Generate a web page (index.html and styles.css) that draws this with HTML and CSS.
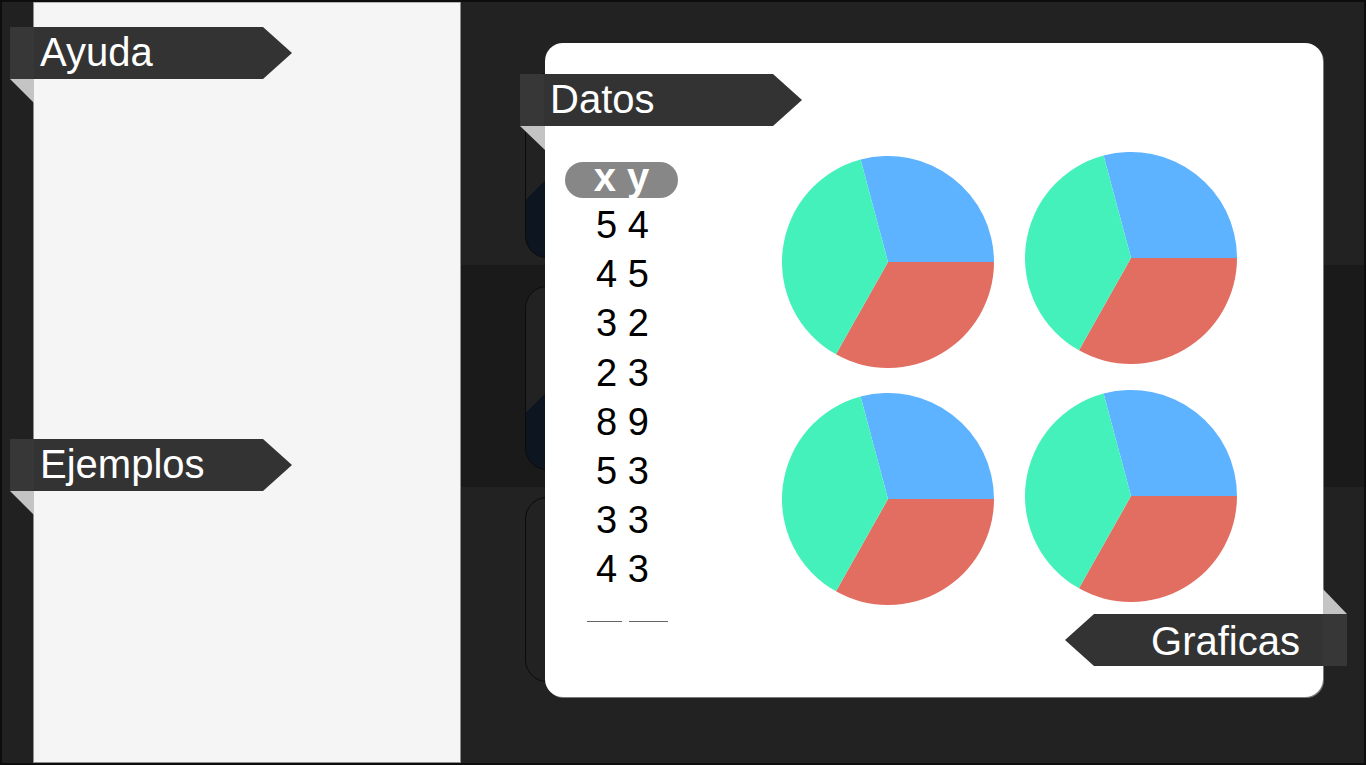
FILE: index.html
```html
<!DOCTYPE html>
<html lang="es">
<head>
<meta charset="utf-8">
<title>Datos y Graficas</title>
<link rel="stylesheet" href="styles.css">
</head>
<body>
<div class="app">
  <div class="gutter"></div>
  <aside class="sidebar">
    <div class="tag tag-left tag-ayuda">
      <div class="tag-body">Ayuda</div>
      <div class="tag-fold"></div>
    </div>
    <div class="tag tag-left tag-ejemplos">
      <div class="tag-body">Ejemplos</div>
      <div class="tag-fold"></div>
    </div>
  </aside>
  <main class="stage">
    <section class="band band-a"><div class="panel panel-thumb"></div></section>
    <section class="band band-b"><div class="panel panel-thumb"></div></section>
    <section class="band band-c"><div class="panel"></div></section>

    <div class="modal">
      <div class="tag tag-left tag-datos">
        <div class="tag-body">Datos</div>
        <div class="tag-fold"></div>
      </div>

      <div class="data">
        <div class="data-head">x y</div>
        <div class="data-row">5 4</div>
        <div class="data-row">4 5</div>
        <div class="data-row">3 2</div>
        <div class="data-row">2 3</div>
        <div class="data-row">8 9</div>
        <div class="data-row">5 3</div>
        <div class="data-row">3 3</div>
        <div class="data-row">4 3</div>
        <div class="data-inputs">
          <span class="field field-x"></span>
          <span class="field field-y"></span>
        </div>
      </div>

      <div class="pies">
        <div class="pie-col">
          <svg class="pie" viewBox="-106 -106 212 212" width="212" height="212">
            <path class="slice-blue" d="M0 0 L106 0 A106 106 0 0 0 -27.43 -102.39 Z"/>
            <path class="slice-red" d="M0 0 L106 0 A106 106 0 0 1 -52.04 92.35 Z"/>
            <path class="slice-green" d="M0 0 L-27.43 -102.39 A106 106 0 0 0 -52.04 92.35 Z"/>
          </svg>
          <svg class="pie" viewBox="-106 -106 212 212" width="212" height="212">
            <path class="slice-blue" d="M0 0 L106 0 A106 106 0 0 0 -27.43 -102.39 Z"/>
            <path class="slice-red" d="M0 0 L106 0 A106 106 0 0 1 -52.04 92.35 Z"/>
            <path class="slice-green" d="M0 0 L-27.43 -102.39 A106 106 0 0 0 -52.04 92.35 Z"/>
          </svg>
        </div>
        <div class="pie-col pie-col-alt">
          <svg class="pie" viewBox="-106 -106 212 212" width="212" height="212">
            <path class="slice-blue" d="M0 0 L106 0 A106 106 0 0 0 -27.43 -102.39 Z"/>
            <path class="slice-red" d="M0 0 L106 0 A106 106 0 0 1 -52.04 92.35 Z"/>
            <path class="slice-green" d="M0 0 L-27.43 -102.39 A106 106 0 0 0 -52.04 92.35 Z"/>
          </svg>
          <svg class="pie" viewBox="-106 -106 212 212" width="212" height="212">
            <path class="slice-blue" d="M0 0 L106 0 A106 106 0 0 0 -27.43 -102.39 Z"/>
            <path class="slice-red" d="M0 0 L106 0 A106 106 0 0 1 -52.04 92.35 Z"/>
            <path class="slice-green" d="M0 0 L-27.43 -102.39 A106 106 0 0 0 -52.04 92.35 Z"/>
          </svg>
        </div>
      </div>

      <div class="tag tag-right tag-graficas">
        <div class="tag-body">Graficas</div>
        <div class="tag-fold"></div>
      </div>
    </div>
  </main>
</div>
</body>
</html>
```

FILE: styles.css
```css
html, body {
  margin: 0;
  padding: 0;
  background: #0d0d0d;
}

body {
  width: 1366px;
  height: 765px;
  overflow: hidden;
  font-family: "Liberation Sans", Arial, sans-serif;
}

.app {
  box-sizing: border-box;
  width: 1366px;
  height: 765px;
  border: 2px solid #0d0d0d;
  display: flex;
  background: #222222;
}

.gutter {
  width: 31px;
  flex: none;
  background: #212121;
}

.sidebar {
  position: relative;
  box-sizing: border-box;
  width: 428px;
  flex: none;
  background: #f5f5f5;
  border-left: 1px solid #8e8e8e;
  border-right: 1px solid #8e8e8e;
  border-bottom: 1px solid #8e8e8e;
  box-shadow: inset 0 1px 0 #b5b5b5;
}

.stage {
  position: relative;
  flex: 1;
  display: flex;
  flex-direction: column;
}

.band {
  box-sizing: border-box;
  padding-left: 64px;
}

.band-a {
  height: 263px;
  padding-top: 71px;
  background: #222222;
}

.band-b {
  height: 222px;
  padding-top: 21px;
  background: #1a1a1a;
}

.band-c {
  flex: 1;
  padding-top: 10px;
  background: #222222;
}

.panel {
  box-sizing: border-box;
  width: 760px;
  height: 185px;
  border: 1px solid #0b0b0b;
  border-radius: 22px;
  background: #222222;
}

.band-b .panel {
  height: 184px;
}

.panel-thumb {
  background: linear-gradient(135deg, #222222 89px, #0d1620 89px);
}

/* ---------- ribbon tags ---------- */

.tag {
  position: absolute;
  width: 282px;
  height: 52px;
}

.tag-body {
  box-sizing: border-box;
  height: 52px;
  line-height: 51px;
  font-size: 40px;
  color: #ffffff;
  white-space: nowrap;
}

.tag-left .tag-body {
  padding-left: 30px;
  background: linear-gradient(to right, #373737 24px, #333333 24px);
  clip-path: polygon(0 0, 253px 0, 100% 50%, 253px 100%, 0 100%);
}

.tag-right .tag-body {
  padding-right: 47px;
  text-align: right;
  line-height: 54px;
  background: linear-gradient(to left, #373737 24px, #333333 24px);
  clip-path: polygon(29px 0, 100% 0, 100% 100%, 29px 100%, 0 50%);
}

.tag-fold {
  position: absolute;
  width: 24px;
  height: 24px;
  background: #c4c4c4;
}

.tag-left .tag-fold {
  left: 0;
  top: 52px;
  clip-path: polygon(0 0, 100% 0, 100% 100%);
}

.tag-right .tag-fold {
  right: 0;
  top: -25px;
  height: 25px;
  clip-path: polygon(0 0, 100% 100%, 0 100%);
}

.tag-ayuda {
  left: -24px;
  top: 25px;
}

.tag-ejemplos {
  left: -24px;
  top: 437px;
}

.tag-datos {
  left: -25px;
  top: 31px;
}

.tag-datos .tag-fold {
  width: 25px;
}

.tag-graficas {
  right: -24px;
  top: 571px;
}

/* ---------- modal card ---------- */

.modal {
  position: absolute;
  left: 84px;
  top: 41px;
  box-sizing: border-box;
  width: 778px;
  height: 654px;
  background: #ffffff;
  border-radius: 18px;
  box-shadow: 1px 1px 0 #7a7a7a;
  display: flex;
  align-items: flex-start;
  padding: 119px 0 0 20px;
}

.data {
  width: 113px;
  flex: none;
  display: flex;
  flex-direction: column;
}

.data-head {
  box-sizing: border-box;
  height: 36px;
  border-radius: 18px;
  background: #878787;
  color: #ffffff;
  font-weight: bold;
  font-size: 40px;
  line-height: 30px;
  text-align: center;
  margin-bottom: 3px;
}

.data-row {
  height: 49.2px;
  line-height: 49.2px;
  font-size: 38px;
  color: #000000;
  text-align: center;
  white-space: pre;
  padding-left: 2px;
}

.data-inputs {
  display: flex;
  gap: 7px;
  padding-left: 22px;
  margin-top: 1px;
}

.field {
  display: block;
  height: 25px;
  border-bottom: 1px solid #666666;
}

.field-x {
  width: 35px;
}

.field-y {
  width: 39px;
}

.pies {
  display: flex;
  gap: 31px;
  margin-left: 104px;
}

.pie-col {
  display: flex;
  flex-direction: column;
  gap: 25px;
  margin-top: -6px;
}

.pie-col-alt {
  gap: 26px;
  margin-top: -10px;
}

.pie {
  display: block;
}

.slice-blue {
  fill: #5db3ff;
}

.slice-red {
  fill: #e26e62;
}

.slice-green {
  fill: #45f1bb;
}
```
